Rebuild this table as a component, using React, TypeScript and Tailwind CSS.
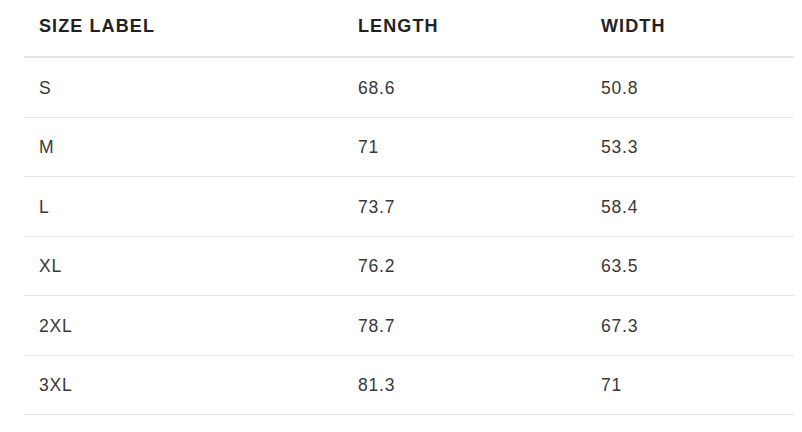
import React from "react";

const rows = [
  ["S", "68.6", "50.8"],
  ["M", "71", "53.3"],
  ["L", "73.7", "58.4"],
  ["XL", "76.2", "63.5"],
  ["2XL", "78.7", "67.3"],
  ["3XL", "81.3", "71"],
];

export default function App() {
  return (
    <div
      className="w-[802px] h-[432px] bg-white pl-[24px] pr-[8px]"
      style={{ fontFamily: '"Liberation Sans", Arial, sans-serif' }}
    >
      <div className="grid grid-cols-[319px_243px_1fr] h-[56px] items-center border-b-2 border-[#e6e6e6] text-[18px] font-bold text-[#222] tracking-[1.1px] box-content">
        <div className="pl-[15px] pb-[3px]">SIZE LABEL</div>
        <div className="pl-[15px] pb-[3px]">LENGTH</div>
        <div className="pl-[15px] pb-[3px]">WIDTH</div>
      </div>
      {rows.map((r) => (
        <div
          key={r[0]}
          className="grid grid-cols-[319px_243px_1fr] h-[59.5px] items-center border-b border-[#e3e3e3] text-[17.5px] text-[#383838] tracking-[0.8px]"
        >
          <div className="pl-[15px] pt-[1px]">{r[0]}</div>
          <div className="pl-[15px] pt-[1px]">{r[1]}</div>
          <div className="pl-[15px] pt-[1px]">{r[2]}</div>
        </div>
      ))}
    </div>
  );
}
